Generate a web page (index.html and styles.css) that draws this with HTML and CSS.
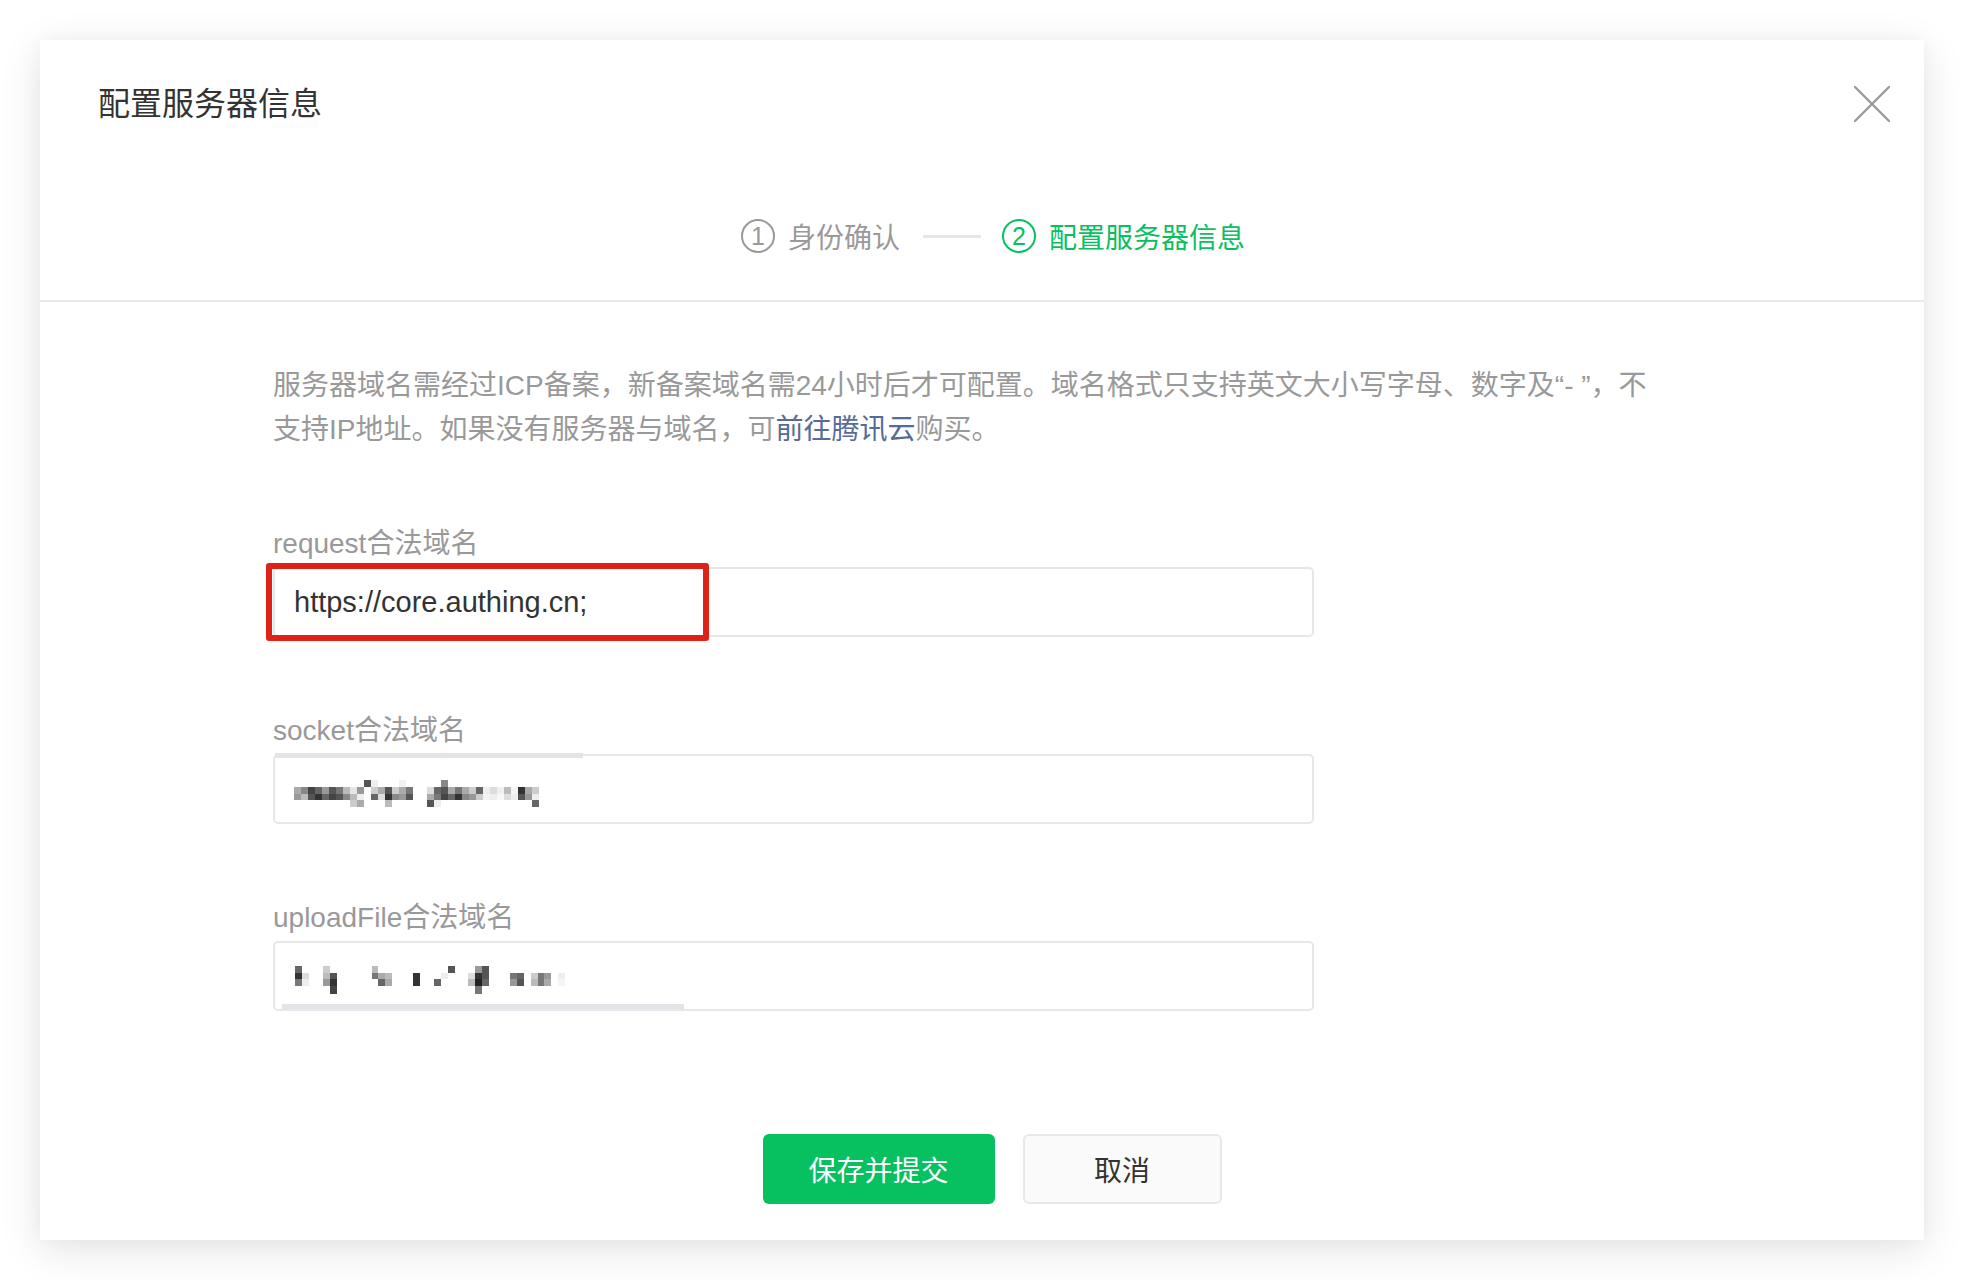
FILE: index.html
```html
<!DOCTYPE html>
<html lang="zh-CN">
<head>
<meta charset="UTF-8" />
<title>配置服务器信息</title>
<link rel="stylesheet" href="styles.css">
</head>
<body>
  <div class="dialog" role="dialog" aria-label="配置服务器信息">
    <div class="dialog-header">
      <h1 class="dialog-title">配置服务器信息</h1>
      <button class="btn-close" aria-label="关闭">
        <svg width="36" height="36" viewBox="0 0 36 36"><path d="M1 1L35 35M35 1L1 35" stroke="#999" stroke-width="2.4" stroke-linecap="round" fill="none"/></svg>
      </button>
    </div>

    <div class="steps-wrap">
      <div class="steps">
        <div class="step done">
          <span class="step-num">1</span>
          <span class="step-text">身份确认</span>
        </div>
        <span class="step-line"></span>
        <div class="step active">
          <span class="step-num">2</span>
          <span class="step-text">配置服务器信息</span>
        </div>
      </div>
    </div>

    <div class="dialog-body">
      <p class="desc">服务器域名需经过ICP备案，新备案域名需24小时后才可配置。域名格式只支持英文大小写字母、数字及“- ”，不<br>支持IP地址。如果没有服务器与域名，可<a href="#" class="link">前往腾讯云</a>购买。</p>

      <div class="field">
        <label class="field-label">request合法域名</label>
        <div class="field-input">
          <span class="field-value">https://core.authing.cn;</span>
          <span class="mark-box"></span>
        </div>
      </div>

      <div class="field">
        <label class="field-label">socket合法域名</label>
        <div class="field-input">
          <span class="smudge smudge-top"></span>
          <svg class="mosaic" width="245" height="27" viewBox="45 30 735 80" shape-rendering="crispEdges">
            <rect x="255" y="30" width="21" height="20" fill="#555"/>
            <rect x="276" y="30" width="21" height="20" fill="#eee"/>
            <rect x="360" y="30" width="21" height="20" fill="#f2f2f2"/>
            <rect x="486" y="30" width="21" height="20" fill="#888"/>

            <rect x="45" y="50" width="21" height="20" fill="#aaa"/>
            <rect x="66" y="50" width="21" height="20" fill="#888"/>
            <rect x="87" y="50" width="21" height="20" fill="#444"/>
            <rect x="108" y="50" width="21" height="20" fill="#666"/>
            <rect x="129" y="50" width="21" height="20" fill="#999"/>
            <rect x="150" y="50" width="21" height="20" fill="#555"/>
            <rect x="171" y="50" width="21" height="20" fill="#777"/>
            <rect x="192" y="50" width="21" height="20" fill="#bbb"/>
            <rect x="213" y="50" width="21" height="20" fill="#e5e5e5"/>
            <rect x="234" y="50" width="21" height="20" fill="#999"/>
            <rect x="276" y="50" width="21" height="20" fill="#ccc"/>
            <rect x="297" y="50" width="21" height="20" fill="#aaa"/>
            <rect x="318" y="50" width="21" height="20" fill="#555"/>
            <rect x="339" y="50" width="21" height="20" fill="#ccc"/>
            <rect x="360" y="50" width="21" height="20" fill="#aaa"/>
            <rect x="381" y="50" width="21" height="20" fill="#777"/>
            <rect x="444" y="50" width="21" height="20" fill="#ddd"/>
            <rect x="465" y="50" width="21" height="20" fill="#666"/>
            <rect x="486" y="50" width="21" height="20" fill="#555"/>
            <rect x="507" y="50" width="21" height="20" fill="#aaa"/>
            <rect x="528" y="50" width="21" height="20" fill="#777"/>
            <rect x="549" y="50" width="21" height="20" fill="#aaa"/>
            <rect x="570" y="50" width="21" height="20" fill="#ccc"/>
            <rect x="591" y="50" width="21" height="20" fill="#666"/>
            <rect x="612" y="50" width="21" height="20" fill="#eee"/>
            <rect x="633" y="50" width="21" height="20" fill="#ddd"/>
            <rect x="654" y="50" width="21" height="20" fill="#f0f0f0"/>
            <rect x="675" y="50" width="21" height="20" fill="#bbb"/>
            <rect x="696" y="50" width="21" height="20" fill="#f5f5f5"/>
            <rect x="717" y="50" width="21" height="20" fill="#333"/>
            <rect x="738" y="50" width="21" height="20" fill="#aaa"/>
            <rect x="759" y="50" width="21" height="20" fill="#ccc"/>

            <rect x="45" y="70" width="21" height="20" fill="#999"/>
            <rect x="66" y="70" width="21" height="20" fill="#bbb"/>
            <rect x="87" y="70" width="21" height="20" fill="#555"/>
            <rect x="108" y="70" width="21" height="20" fill="#333"/>
            <rect x="129" y="70" width="21" height="20" fill="#666"/>
            <rect x="150" y="70" width="21" height="20" fill="#444"/>
            <rect x="171" y="70" width="21" height="20" fill="#555"/>
            <rect x="192" y="70" width="21" height="20" fill="#888"/>
            <rect x="213" y="70" width="21" height="20" fill="#bbb"/>
            <rect x="234" y="70" width="21" height="20" fill="#eee"/>
            <rect x="276" y="70" width="21" height="20" fill="#666"/>
            <rect x="297" y="70" width="21" height="20" fill="#ddd"/>
            <rect x="318" y="70" width="21" height="20" fill="#333"/>
            <rect x="339" y="70" width="21" height="20" fill="#888"/>
            <rect x="360" y="70" width="21" height="20" fill="#999"/>
            <rect x="381" y="70" width="21" height="20" fill="#555"/>
            <rect x="444" y="70" width="21" height="20" fill="#aaa"/>
            <rect x="465" y="70" width="21" height="20" fill="#777"/>
            <rect x="486" y="70" width="21" height="20" fill="#444"/>
            <rect x="507" y="70" width="21" height="20" fill="#666"/>
            <rect x="528" y="70" width="21" height="20" fill="#333"/>
            <rect x="549" y="70" width="21" height="20" fill="#888"/>
            <rect x="570" y="70" width="21" height="20" fill="#999"/>
            <rect x="591" y="70" width="21" height="20" fill="#ccc"/>
            <rect x="612" y="70" width="21" height="20" fill="#f3f3f3"/>
            <rect x="633" y="70" width="21" height="20" fill="#eee"/>
            <rect x="654" y="70" width="21" height="20" fill="#f7f7f7"/>
            <rect x="675" y="70" width="21" height="20" fill="#ddd"/>
            <rect x="696" y="70" width="21" height="20" fill="#eee"/>
            <rect x="717" y="70" width="21" height="20" fill="#555"/>
            <rect x="738" y="70" width="21" height="20" fill="#999"/>
            <rect x="759" y="70" width="21" height="20" fill="#eee"/>

            <rect x="213" y="90" width="21" height="20" fill="#ccc"/>
            <rect x="234" y="90" width="21" height="20" fill="#aaa"/>
            <rect x="318" y="90" width="21" height="20" fill="#bbb"/>
            <rect x="444" y="90" width="21" height="20" fill="#555"/>
            <rect x="465" y="90" width="21" height="20" fill="#eee"/>
            <rect x="759" y="90" width="21" height="20" fill="#666"/>
          </svg>
        </div>
      </div>

      <div class="field">
        <label class="field-label">uploadFile合法域名</label>
        <div class="field-input">
          <svg class="mosaic" width="273" height="28" viewBox="45 590 820 85" shape-rendering="crispEdges">
            <rect x="45" y="590" width="21" height="20" fill="#666"/>
            <rect x="45" y="610" width="21" height="20" fill="#333"/>
            <rect x="45" y="630" width="21" height="20" fill="#777"/>
            <rect x="66" y="610" width="21" height="20" fill="#ddd"/>
            <rect x="66" y="630" width="21" height="20" fill="#eee"/>
            <rect x="129" y="590" width="21" height="20" fill="#ccc"/>
            <rect x="129" y="610" width="21" height="20" fill="#bbb"/>
            <rect x="129" y="630" width="21" height="20" fill="#999"/>
            <rect x="150" y="610" width="21" height="20" fill="#555"/>
            <rect x="150" y="630" width="21" height="20" fill="#333"/>
            <rect x="150" y="650" width="21" height="25" fill="#444"/>
            <rect x="276" y="590" width="21" height="20" fill="#bbb"/>
            <rect x="276" y="610" width="21" height="20" fill="#777"/>
            <rect x="297" y="610" width="21" height="20" fill="#aaa"/>
            <rect x="297" y="630" width="21" height="20" fill="#666"/>
            <rect x="318" y="610" width="21" height="20" fill="#bbb"/>
            <rect x="318" y="630" width="21" height="20" fill="#aaa"/>
            <rect x="402" y="610" width="21" height="20" fill="#333"/>
            <rect x="402" y="630" width="21" height="20" fill="#333"/>
            <rect x="465" y="630" width="21" height="20" fill="#666"/>
            <rect x="486" y="610" width="21" height="20" fill="#eee"/>
            <rect x="507" y="590" width="21" height="20" fill="#555"/>
            <rect x="570" y="610" width="21" height="20" fill="#ddd"/>
            <rect x="570" y="630" width="21" height="20" fill="#bbb"/>
            <rect x="591" y="590" width="21" height="20" fill="#999"/>
            <rect x="591" y="610" width="21" height="20" fill="#333"/>
            <rect x="591" y="630" width="21" height="20" fill="#222"/>
            <rect x="591" y="650" width="21" height="25" fill="#777"/>
            <rect x="612" y="590" width="21" height="20" fill="#555"/>
            <rect x="612" y="610" width="21" height="20" fill="#555"/>
            <rect x="612" y="630" width="21" height="20" fill="#666"/>
            <rect x="696" y="610" width="21" height="20" fill="#777"/>
            <rect x="696" y="630" width="21" height="20" fill="#999"/>
            <rect x="717" y="610" width="21" height="20" fill="#666"/>
            <rect x="717" y="630" width="21" height="20" fill="#555"/>
            <rect x="759" y="610" width="21" height="20" fill="#ccc"/>
            <rect x="759" y="630" width="21" height="20" fill="#bbb"/>
            <rect x="780" y="610" width="21" height="20" fill="#777"/>
            <rect x="780" y="630" width="21" height="20" fill="#777"/>
            <rect x="801" y="610" width="21" height="20" fill="#999"/>
            <rect x="801" y="630" width="21" height="20" fill="#aaa"/>
            <rect x="843" y="610" width="21" height="20" fill="#eee"/>
            <rect x="843" y="630" width="21" height="20" fill="#f5f5f5"/>
          </svg>
          <span class="smudge smudge-bottom"></span>
        </div>
      </div>

      <div class="actions">
        <button class="btn btn-primary">保存并提交</button>
        <button class="btn btn-default">取消</button>
      </div>
    </div>
  </div>
</body>
</html>
```

FILE: styles.css
```css
/* Reset */
*, *:before, *:after {
  box-sizing: border-box;
}

body {
  margin: 0;
  padding: 40px;
  background: #fff;
  font-family: 'Liberation Sans', 'Noto Sans CJK SC', sans-serif;
  color: #333;
}

.dialog {
  height: 1200px;
  background: #fff;
  box-shadow: 0 10px 40px rgba(0,0,0,0.11), 0 0 16px rgba(0,0,0,0.03);
}

/* Header */
.dialog-header {
  display: flex;
  justify-content: space-between;
  align-items: center;
  padding: 44px 34px 0 58px;
}

.dialog-title {
  margin: 0;
  font-size: 32px;
  font-weight: 400;
  line-height: 40px;
  color: #333;
}

.btn-close {
  width: 36px;
  height: 36px;
  padding: 0;
  border: none;
  background: none;
  cursor: pointer;
}

.btn-close svg {
  display: block;
}

/* Steps */
.steps-wrap {
  padding-bottom: 44px;
  border-bottom: 2px solid #e6e9ee;
}

.steps {
  display: flex;
  justify-content: center;
  align-items: center;
  height: 40px;
  margin-top: 92px;
  padding-left: 22px;
}

.step {
  display: flex;
  align-items: center;
  font-size: 28px;
  color: #999;
}

.step-num {
  width: 34px;
  height: 34px;
  border: 2px solid #999;
  border-radius: 50%;
  display: flex;
  align-items: center;
  justify-content: center;
  font-size: 25px;
  margin-right: 13px;
}

.step.active {
  color: #07c160;
}

.step.active .step-num {
  border-color: #07c160;
}

.step-line {
  width: 58px;
  height: 3px;
  background: #e3e6ea;
  margin: 0 21px 0 23px;
}

/* Body */
.dialog-body {
  padding: 62px 233px 0;
}

.desc {
  margin: 0 0 72px;
  font-size: 28px;
  line-height: 44px;
  color: #999;
  white-space: nowrap;
}

.link {
  color: #576b95;
  text-decoration: none;
}

.field {
  width: 1041px;
  margin-bottom: 74px;
}

.field-label {
  display: block;
  margin-bottom: 3px;
  font-size: 28px;
  line-height: 40px;
  color: #999;
}

.field-input {
  position: relative;
  display: flex;
  align-items: center;
  height: 70px;
  padding: 0 19px;
  border: 2px solid #e7e7eb;
  border-radius: 5px;
  background: #fff;
}

.field-value {
  font-size: 29px;
  color: #333;
}

.mosaic {
  display: block;
  margin-top: 8px;
}

/* red annotation over the first field */
.mark-box {
  position: absolute;
  left: -9px;
  top: -6px;
  width: 443px;
  height: 78px;
  border: 6px solid #de2216;
  border-radius: 3px;
}

.smudge {
  position: absolute;
  height: 5px;
  background: #e4e4e8;
}

.smudge-top {
  top: -3px;
  left: 0;
  width: 308px;
}

.smudge-bottom {
  bottom: 0;
  left: 7px;
  width: 402px;
}

/* Buttons */
.actions {
  display: flex;
  justify-content: center;
  gap: 28px;
  margin-top: 123px;
  padding-left: 20px;
}

.btn {
  height: 70px;
  border-radius: 6px;
  font-size: 28px;
  font-family: inherit;
  cursor: pointer;
}

.btn-primary {
  width: 232px;
  border: none;
  background: #07c160;
  color: #fff;
}

.btn-default {
  width: 199px;
  border: 2px solid #e5e8ec;
  background: #fafafa;
  color: #333;
}
```
